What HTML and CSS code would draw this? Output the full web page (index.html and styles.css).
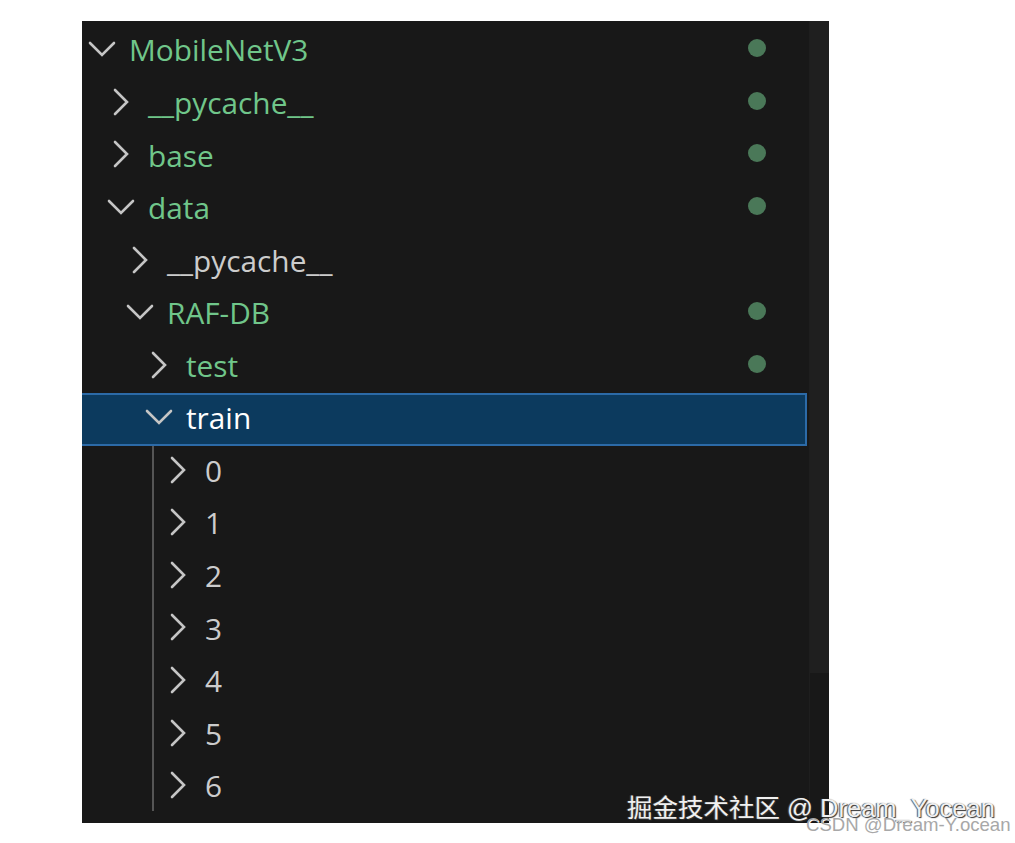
FILE: index.html
```html
<!DOCTYPE html>
<html lang="zh-CN">
<head>
<meta charset="utf-8">
<title>Explorer</title>
<link rel="stylesheet" href="styles.css">
</head>
<body>
<div class="explorer">
  <div class="tree">
    <div class="row l0 git"><svg class="chev" viewBox="0 0 32 32"><path d="M4 10 L16 22 L28 10"/></svg><span class="name">MobileNetV3</span><span class="dot"></span></div>
    <div class="row l1 git"><svg class="chev" viewBox="0 0 32 32"><path d="M10 4 L22 16 L10 28"/></svg><span class="name">__pycache__</span><span class="dot"></span></div>
    <div class="row l1 git"><svg class="chev" viewBox="0 0 32 32"><path d="M10 4 L22 16 L10 28"/></svg><span class="name">base</span><span class="dot"></span></div>
    <div class="row l1 git"><svg class="chev" viewBox="0 0 32 32"><path d="M4 10 L16 22 L28 10"/></svg><span class="name">data</span><span class="dot"></span></div>
    <div class="row l2"><svg class="chev" viewBox="0 0 32 32"><path d="M10 4 L22 16 L10 28"/></svg><span class="name">__pycache__</span></div>
    <div class="row l2 git"><svg class="chev" viewBox="0 0 32 32"><path d="M4 10 L16 22 L28 10"/></svg><span class="name">RAF-DB</span><span class="dot"></span></div>
    <div class="row l3 git"><svg class="chev" viewBox="0 0 32 32"><path d="M10 4 L22 16 L10 28"/></svg><span class="name">test</span><span class="dot"></span></div>
    <div class="row l3 selected"><svg class="chev" viewBox="0 0 32 32"><path d="M4 10 L16 22 L28 10"/></svg><span class="name">train</span></div>
    <div class="group">
      <div class="row l4"><svg class="chev" viewBox="0 0 32 32"><path d="M10 4 L22 16 L10 28"/></svg><span class="name">0</span></div>
      <div class="row l4"><svg class="chev" viewBox="0 0 32 32"><path d="M10 4 L22 16 L10 28"/></svg><span class="name">1</span></div>
      <div class="row l4"><svg class="chev" viewBox="0 0 32 32"><path d="M10 4 L22 16 L10 28"/></svg><span class="name">2</span></div>
      <div class="row l4"><svg class="chev" viewBox="0 0 32 32"><path d="M10 4 L22 16 L10 28"/></svg><span class="name">3</span></div>
      <div class="row l4"><svg class="chev" viewBox="0 0 32 32"><path d="M10 4 L22 16 L10 28"/></svg><span class="name">4</span></div>
      <div class="row l4"><svg class="chev" viewBox="0 0 32 32"><path d="M10 4 L22 16 L10 28"/></svg><span class="name">5</span></div>
      <div class="row l4"><svg class="chev" viewBox="0 0 32 32"><path d="M10 4 L22 16 L10 28"/></svg><span class="name">6</span></div>
    </div>
  </div>
  <div class="scrollbar"><div class="thumb"></div></div>
</div>
<div class="wm-juejin">掘金技术社区 @ Dream_Yocean</div>
<div class="wm-csdn">CSDN @Dream-Y.ocean</div>
</body>
</html>
```

FILE: styles.css
```css
html, body {
  margin: 0;
  padding: 0;
  background: #ffffff;
}

body {
  position: relative;
  width: 1015px;
  height: 843px;
  overflow: hidden;
  font-family: "Open Sans", "Noto Sans", sans-serif;
}

.explorer {
  margin: 21px 0 0 82px;
  width: 747px;
  height: 802px;
  background: #181818;
  display: flex;
  gap: 2px;
}

.tree {
  width: 725px;
  padding-top: 4px;
  box-sizing: border-box;
}

.row {
  height: 52.57px;
  box-sizing: border-box;
  display: flex;
  align-items: center;
  padding-right: 41px;
  color: #cccccc;
  font-size: 29.8px;
  white-space: nowrap;
}

.row.l0 { padding-left: 4px; }
.row.l1 { padding-left: 23px; }
.row.l2 { padding-left: 42px; }
.row.l3 { padding-left: 61px; }
.row.l4 { padding-left: 80px; }

.chev {
  width: 32px;
  height: 32px;
  flex: none;
  margin-right: 11px;
  margin-top: -4px;
  fill: none;
  stroke: #c5c5c5;
  stroke-width: 2.6;
  stroke-linecap: round;
  stroke-linejoin: miter;
}

.name {
  line-height: 1;
  margin-top: -2px;
}

.git .name { color: #70c68a; }

.dot {
  margin-left: auto;
  width: 18px;
  height: 18px;
  border-radius: 50%;
  background: #4a7858;
  flex: none;
  margin-top: -6px;
}

.row.selected {
  background: #0c3a5e;
  border: 2px solid #2c6aa7;
  border-left: none;
}

.row.selected .name { color: #ffffff; }

.group {
  background: linear-gradient(#555555, #555555) no-repeat 70px 0 / 2px calc(100% - 2px);
}

.scrollbar {
  width: 20px;
  display: flex;
  flex-direction: column;
  border-left: 1px solid #1e1e1e;
  box-sizing: border-box;
}

.thumb {
  height: 652px;
  background: #1f1f1f;
}

.wm-juejin {
  position: absolute;
  left: 627px;
  top: 787px;
  font-family: "Liberation Sans", "Noto Sans CJK SC", sans-serif;
  font-size: 25.5px;
  color: #f0f0f0;
  text-shadow: 1px 1px 1px #333, -1px 0 1px #555;
  white-space: nowrap;
}

.wm-csdn {
  position: absolute;
  left: 806px;
  top: 814px;
  font-family: "Liberation Sans", sans-serif;
  font-size: 18.6px;
  color: #a8a8a8;
  text-shadow: 1px 1px 0 #ffffff;
  white-space: nowrap;
}
```
